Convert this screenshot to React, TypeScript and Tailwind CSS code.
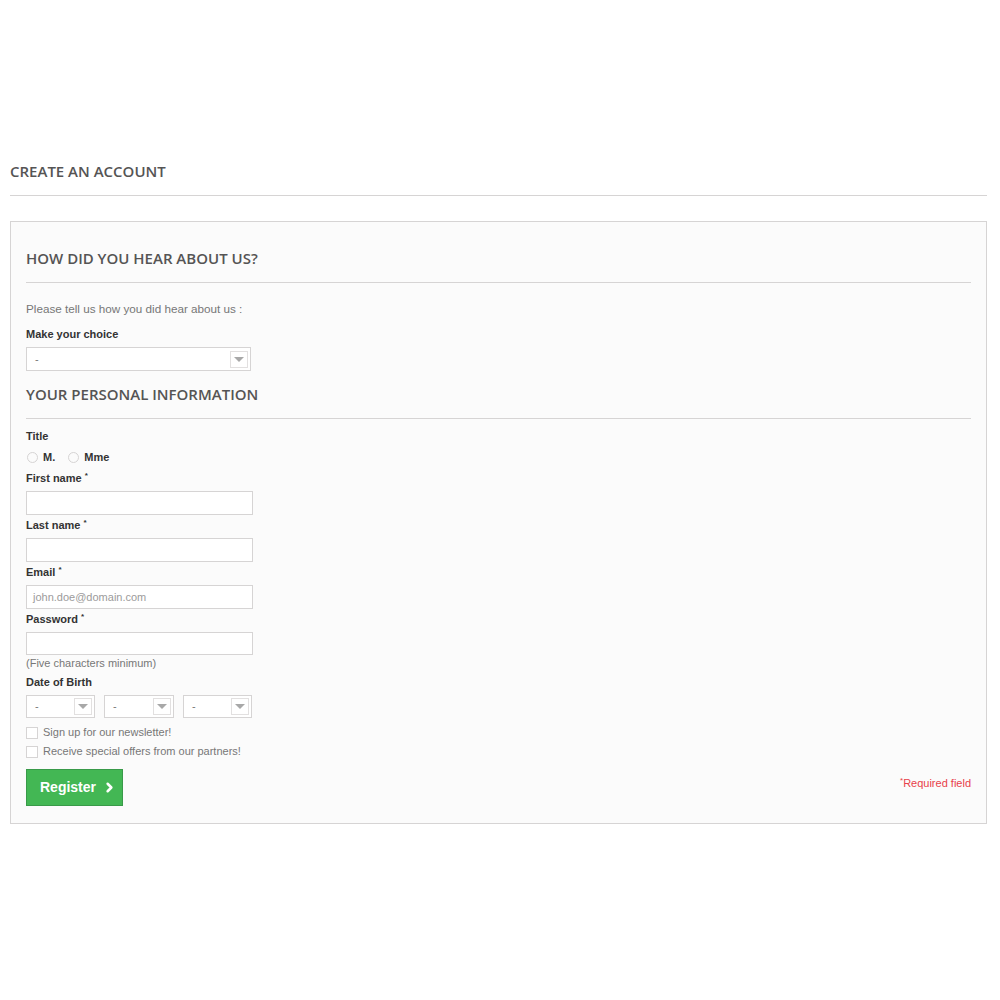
import { ChevronRight } from 'lucide-react';

const body = "font-['Liberation_Sans',Arial,sans-serif]";
const head = "font-['Open_Sans',sans-serif] font-semibold text-[15px] leading-[22px] text-[#555454] uppercase";

function SelectBox({ width, h = 'h-[24px]' }: { width: string; h?: string }) {
  return (
    <div className={`${width} ${h} bg-white border border-[#d6d4d4] flex items-center justify-between pl-[8px] pr-[2px]`}>
      <span className="text-[11px] text-[#777]">-</span>
      <div className="w-[18px] h-[17px] border border-[#e2e0e0] flex items-center justify-center">
        <div className="w-0 h-0 border-l-[5px] border-r-[5px] border-t-[5px] border-l-transparent border-r-transparent border-t-[#a8a8a8]" />
      </div>
    </div>
  );
}

function Field({ label, placeholder }: { label: string; placeholder?: string }) {
  return (
    <div className="h-[47px]">
      <div className="h-[18px] leading-[18px] text-[11px] font-bold text-[#333]">
        {label} <sup className="text-[8px]">*</sup>
      </div>
      <div className="mt-[4px] w-[227px] h-[24px] bg-white border border-[#d6d4d4] flex items-center px-[6px] text-[11px] text-[#9c9b9b]">
        {placeholder}
      </div>
    </div>
  );
}

function Check({ label }: { label: string }) {
  return (
    <div className="h-[19px] flex items-center gap-[5px]">
      <div className="w-[12px] h-[12px] bg-white border border-[#d6d4d4]" />
      <span className="text-[11px] text-[#777]">{label}</span>
    </div>
  );
}

export default function App() {
  return (
    <div className={`${body} bg-white min-h-[1000px] pl-[10px] pr-[13px] pt-[160px]`}>
      <h1 className={`${head} h-[36px] border-b border-[#d6d4d4]`}>Create an account</h1>

      <div className="mt-[25px] border border-[#d6d4d4] bg-[#fbfbfb] px-[15px] pt-[25px] pb-[17px]">
        <h3 className={`${head} h-[36px] border-b border-[#d6d4d4]`}>How did you hear about us?</h3>
        <p className="mt-[17px] h-[18px] leading-[18px] text-[11.7px] text-[#777]">
          Please tell us how you did hear about us :
        </p>
        <div className="mt-[7px] h-[18px] leading-[18px] text-[11px] font-bold text-[#333]">Make your choice</div>
        <div className="mt-[4px]">
          <SelectBox width="w-[225px]" />
        </div>

        <h3 className={`${head} mt-[12px] h-[36px] border-b border-[#d6d4d4]`}>Your personal information</h3>
        <div className="mt-[8px] h-[18px] leading-[18px] text-[11px] font-bold text-[#333]">Title</div>
        <div className="mt-[3px] h-[18px] flex items-center text-[11px] font-bold text-[#333]">
          <div className="w-[11px] h-[11px] rounded-full border border-[#d6d4d4] bg-[#fbfbfb] ml-[1px]" />
          <span className="ml-[5px]">M.</span>
          <div className="w-[11px] h-[11px] rounded-full border border-[#d6d4d4] bg-[#fbfbfb] ml-[13px]" />
          <span className="ml-[5px]">Mme</span>
        </div>

        <div className="mt-[3px]">
          <Field label="First name" />
          <Field label="Last name" />
          <Field label="Email" placeholder="john.doe@domain.com" />
          <div>
            <div className="h-[18px] leading-[18px] text-[11px] font-bold text-[#333]">
              Password <sup className="text-[8px]">*</sup>
            </div>
            <div className="mt-[4px] w-[227px] h-[23px] bg-white border border-[#d6d4d4]" />
          </div>
        </div>
        <p className="h-[16px] leading-[16px] text-[11px] text-[#777]">(Five characters minimum)</p>

        <div className="mt-[2px] h-[18px] leading-[18px] text-[11px] font-bold text-[#333]">Date of Birth</div>
        <div className="mt-[4px] flex gap-[9px]">
          <SelectBox width="w-[69px]" h="h-[23px]" />
          <SelectBox width="w-[70px]" h="h-[23px]" />
          <SelectBox width="w-[69px]" h="h-[23px]" />
        </div>

        <div className="mt-[5px]">
          <Check label="Sign up for our newsletter!" />
          <Check label="Receive special offers from our partners!" />
        </div>

        <div className="mt-[8px] flex items-start justify-between">
          <button className="h-[37px] w-[97px] bg-[#43b754] border border-[#399a49] text-white font-bold text-[14px] flex items-center pl-[13px] gap-[6px]">
            Register
            <ChevronRight className="w-[15px] h-[15px]" strokeWidth={4} />
          </button>
          <span className="mt-[5px] h-[18px] leading-[18px] text-[11px] text-[#e8404a]">
            <sup className="text-[8px]">*</sup>Required field
          </span>
        </div>
      </div>
    </div>
  );
}
